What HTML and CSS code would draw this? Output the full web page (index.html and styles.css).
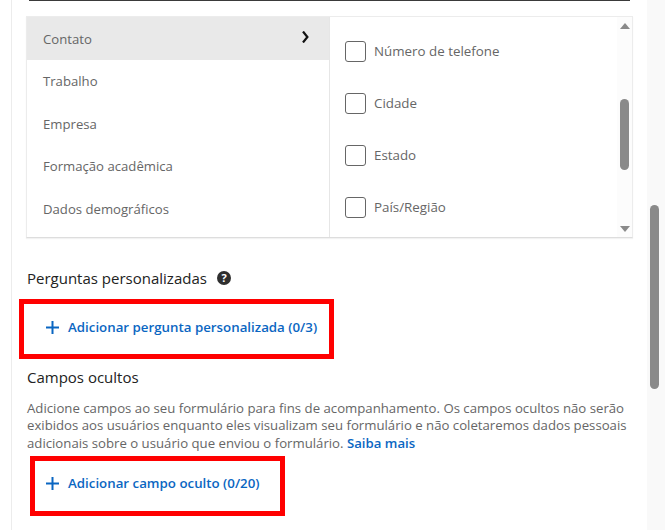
FILE: index.html
```html
<!DOCTYPE html>
<html lang="pt">
<head>
<meta charset="utf-8">
<title>Formulário</title>
<link rel="stylesheet" href="styles.css">
</head>
<body>
<div class="page">
  <main class="main">
    <div class="topline"></div>
    <section class="picker">
      <ul class="cats">
        <li class="cat active"><span>Contato</span>
          <svg class="chev" width="7" height="12" viewBox="0 0 7 12"><path d="M1 0.5 L5.4 6 L1 11.5" fill="none" stroke="#111" stroke-width="2.2"/></svg>
        </li>
        <li class="cat">Trabalho</li>
        <li class="cat">Empresa</li>
        <li class="cat">Formação acadêmica</li>
        <li class="cat">Dados demográficos</li>
      </ul>
      <div class="fields">
        <ul class="options">
          <li class="option"><span class="box"></span>Número de telefone</li>
          <li class="option"><span class="box"></span>Cidade</li>
          <li class="option"><span class="box"></span>Estado</li>
          <li class="option"><span class="box"></span>País/Região</li>
        </ul>
        <div class="inner-scroll">
          <span class="arrow up"></span>
          <span class="inner-thumb"></span>
          <span class="arrow down"></span>
        </div>
      </div>
    </section>
    <h2 class="heading custom">Perguntas personalizadas
      <svg class="help" width="14" height="14" viewBox="0 0 14 14"><circle cx="7" cy="7" r="7" fill="#2f2f2f"/><text x="7" y="11" text-anchor="middle" class="help-mark">?</text></svg>
    </h2>
    <div class="add add-question"><svg class="plus" width="13" height="13" viewBox="0 0 13 13"><path d="M6.5 0V13M0 6.5H13" stroke="#0a66c2" stroke-width="2"/></svg><a class="add-label">Adicionar pergunta personalizada (0/3)</a></div>
    <h2 class="heading hidden-title">Campos ocultos</h2>
    <p class="desc">Adicione campos ao seu formulário para fins de acompanhamento. Os campos ocultos não serão exibidos aos usuários enquanto eles visualizam seu formulário e não coletaremos dados pessoais adicionais sobre o usuário que enviou o formulário. <a class="more">Saiba mais</a></p>
    <div class="add add-hidden"><svg class="plus" width="13" height="13" viewBox="0 0 13 13"><path d="M6.5 0V13M0 6.5H13" stroke="#0a66c2" stroke-width="2"/></svg><a class="add-label">Adicionar campo oculto (0/20)</a></div>
  </main>
  <div class="page-scroll"><span class="page-thumb"></span></div>
</div>
</body>
</html>
```
FILE: styles.css
```css
* { box-sizing: border-box; }
html, body { margin: 0; padding: 0; height: 530px; overflow: hidden; background: #fff; }
body { font-family: "Open Sans", "Noto Sans", sans-serif; color: #5e5e5e; }
ul { list-style: none; margin: 0; padding: 0; }
.page { display: flex; height: 530px; }
.main { width: 647px; margin-left: 11px; border-left: 1px solid #ececec; height: 530px; overflow: hidden; display: flex; flex-direction: column; align-items: flex-start; }
.topline { width: 601px; height: 1px; margin-left: 17px; background: #3a3a3a; flex: none; }
.picker { margin: 15px 0 0 14px; width: 607px; height: 222px; display: flex; flex: none; border: 1px solid #ececec; border-bottom: 1px solid #ddd; box-shadow: 0 1px 1px rgba(0,0,0,.05); }
.cats { width: 303px; border-right: 1px solid #e6e6e6; }
.cat { height: 42.7px; display: flex; align-items: center; justify-content: space-between; padding: 0 20px 0 16px; font-size: 13.15px; color: #666; }
.active { background: #e9e9e9; padding-top: 1px; }
.chev { display: block; margin-top: -3px; }
.fields { flex: 1; display: flex; }
.options { flex: 1; padding-top: 8px; }
.option { height: 52px; display: flex; align-items: center; padding-left: 15px; gap: 8px; font-size: 13.35px; color: #666; }
.box { width: 21px; height: 21px; border: 1px solid #666; border-radius: 3px; background: #fff; flex: none; }
.inner-scroll { width: 15px; background: #fcfcfc; display: flex; flex-direction: column; align-items: center; }
.arrow { width: 0; height: 0; border-left: 5px solid transparent; border-right: 5px solid transparent; }
.up { border-bottom: 6px solid #8a8a8a; margin-top: 6px; }
.down { border-top: 6px solid #8a8a8a; margin-top: 56px; }
.inner-thumb { width: 9px; height: 71px; margin-top: 70px; background: #8a8a8a; border-radius: 5px; }
.heading { margin: 0; font-weight: 400; font-size: 15px; color: #222; }
.custom { margin: 30px 0 0 15px; height: 20px; line-height: 20px; display: flex; align-items: center; gap: 10px; }
.help { display: block; }
.help-mark { font-size: 11px; font-weight: 700; fill: #fff; font-family: "Open Sans", sans-serif; }
.add { display: flex; align-items: center; border: 5px solid #f00; flex: none; height: 60px; }
.plus { flex: none; margin-right: 9px; }
.add-label { font-size: 13.3px; font-weight: 600; color: #0a66c2; white-space: nowrap; }
.add-question { margin: 11px 0 0 7px; width: 315px; padding: 0 0 4px 22px; }
.hidden-title { margin: 8px 0 0 15px; height: 20px; line-height: 20px; }
.desc { margin: 13px 0 0 15px; width: 610px; font-size: 13.2px; line-height: 17.3px; color: #666; }
.more { color: #0a66c2; font-weight: 600; }
.add-hidden { margin: 4px 0 0 18px; width: 255px; padding: 0 0 5px 11px; }
.page-scroll { width: 18px; background: #f9f9f9; height: 530px; flex: none; }
.page-thumb { display: block; width: 9px; height: 184px; margin: 205px 0 0 3px; border-radius: 5px; background: #8a8a8a; }
```
